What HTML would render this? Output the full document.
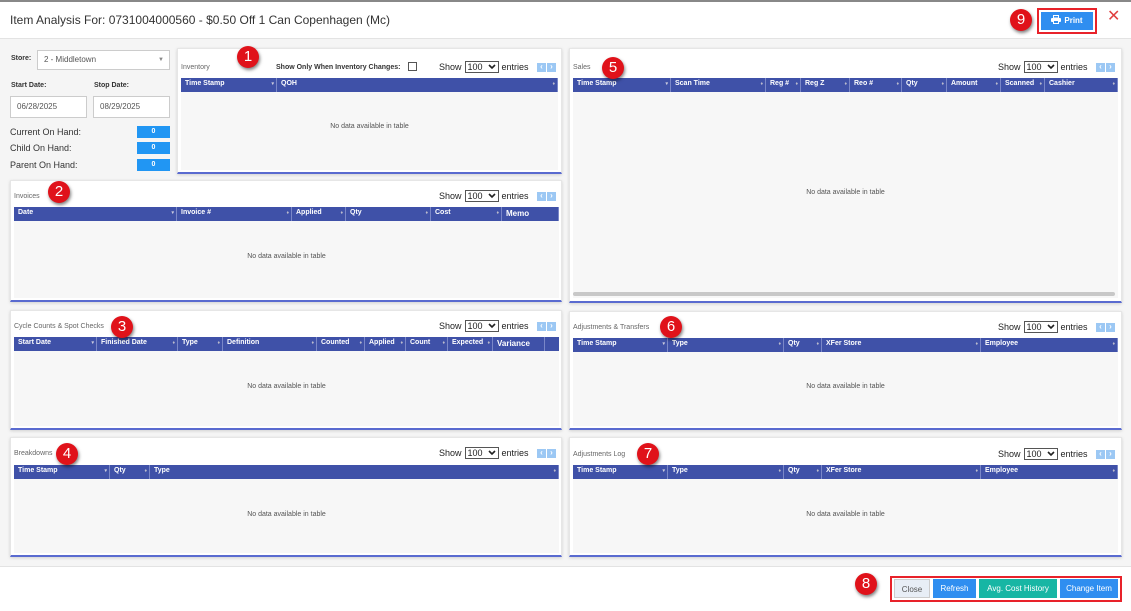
<!DOCTYPE html>
<html><head><meta charset="utf-8"><style>
*{box-sizing:border-box;margin:0;padding:0}
body{width:1131px;height:611px;overflow:hidden;background:#fff;font-family:"Liberation Sans",Arial,sans-serif;position:relative;color:#333}
.a{position:absolute;white-space:nowrap}
.top{left:0;top:0;width:1131px;height:2px;background:#888}
.title{left:10px;top:13px;font-size:12px;color:#333}
.hline{left:0;width:1131px;height:1px;background:#e3e3e3}
.mid{left:0;top:38px;width:1131px;height:528px;background:#f5f5f5}
.panel{background:#fff;border:1px solid #e6e6e6;box-shadow:0 1px 3px rgba(0,0,0,.15);border-bottom:2px solid #5a6bd0}
.ptitle{font-size:7px;color:#666}
.tbody{background:#f7f7f7}
.th{height:14px;background:#3f51a8;display:flex;color:#fff;font-size:7px;font-weight:bold}
.th div{border-right:1px solid #7a87c8;padding:2px 0 0 4px;position:relative;white-space:nowrap;overflow:hidden}
.th div:after{content:"\2666";position:absolute;right:2px;top:3px;font-size:5px;color:#bbc}
.th div.n:after{content:""}
.th div.s:after{content:"\25BE";color:#ccd}
.nd{font-size:7px;color:#555;text-align:center;width:100%}
.show{font-size:9px;color:#222;display:flex;align-items:center}
.sel{display:inline-block;width:34px;height:12px;border:1px solid #555;font-size:9px;padding-left:2px;line-height:10px;margin:0 3px;position:relative;background:#fff}
.sel svg{position:absolute;right:2px;top:2px}
.arrs{display:flex;width:22px}
.arr{display:block;width:9px;height:9px;background:#9cc8f4;margin-right:1px;color:#fff;font-size:8px;text-align:center;line-height:8px;font-weight:bold}
.badge{width:22px;height:22px;border-radius:50%;background:#e0121a;color:#fff;font-size:15px;text-align:center;line-height:22px;box-shadow:1px 2px 3px rgba(0,0,0,.5)}
.lbl{font-size:7px;font-weight:bold;color:#333}
.inp{border:1px solid #ccc;background:#fff;font-size:8px;color:#555;padding-left:6px}
.oh{font-size:9px;color:#333}
.ohv{width:33px;height:12px;background:#2196f3;color:#fff;font-size:7px;text-align:center;line-height:12px;font-weight:bold}
.btn{height:19px;font-size:8px;color:#fff;text-align:center;line-height:19px}
</style></head><body>
<div class="a top"></div>
<div class="a title">Item Analysis For: 0731004000560 - $0.50 Off 1 Can Copenhagen (Mc)</div>
<div class="a mid"></div>
<div class="a hline" style="top:38px"></div>
<div class="a hline" style="top:566px"></div>

<!-- print -->
<div class="a" style="left:1037px;top:8px;width:60px;height:26px;border:2px solid #e8222a"></div>
<div class="a btn" style="left:1041px;top:12px;width:52px;background:#2f8ef0;line-height:18px;height:18px;font-weight:bold"><svg width="10" height="9" viewBox="0 0 10 9" style="vertical-align:-1px;margin-right:3px"><rect x="2.5" y="0.5" width="5" height="2.5" fill="none" stroke="#fff"/><rect x="0" y="3" width="10" height="4" rx="1" fill="#fff"/><rect x="2.5" y="5.5" width="5" height="3" fill="#2f8ef0" stroke="#fff"/></svg>Print</div>
<div class="a" style="left:1107px;top:6px;font-size:16px;color:#e04040">&#x2715;</div>
<div class="a badge" style="left:1010px;top:9px">9</div>

<!-- left controls -->
<div class="a lbl" style="left:11px;top:55px">Store:</div>
<div class="a inp" style="left:37px;top:50px;width:133px;height:20px;line-height:18px">2 - Middletown<span style="position:absolute;right:5px;font-size:6px;color:#888">&#9660;</span></div>
<div class="a lbl" style="left:11px;top:82px">Start Date:</div>
<div class="a lbl" style="left:94px;top:82px">Stop Date:</div>
<div class="a inp" style="left:10px;top:96px;width:77px;height:22px;line-height:20px">06/28/2025</div>
<div class="a inp" style="left:93px;top:96px;width:77px;height:22px;line-height:20px">08/29/2025</div>
<div class="a oh" style="left:10px;top:127px">Current On Hand:</div>
<div class="a ohv" style="left:137px;top:126px">0</div>
<div class="a oh" style="left:10px;top:143px">Child On Hand:</div>
<div class="a ohv" style="left:137px;top:142px">0</div>
<div class="a oh" style="left:10px;top:160px">Parent On Hand:</div>
<div class="a ohv" style="left:137px;top:159px">0</div>

<!-- inventory -->
<div class="a panel" style="left:177px;top:48px;width:385px;height:126px"></div>
<div class="a ptitle" style="left:181px;top:64px">Inventory</div>
<div class="a lbl" style="left:276px;top:64px">Show Only When Inventory Changes:</div>
<div class="a" style="left:408px;top:62px;width:9px;height:9px;border:1px solid #555;background:#fff"></div>
<div class="a show" style="left:439px;top:61px">Show<span class="sel">100<svg width="8" height="6" viewBox="0 0 8 6"><path d="M1 1L4 4L7 1" stroke="#222" stroke-width="1.6" fill="none"/></svg></span>entries</div>
<div class="a arrs" style="left:537px;top:63px"><span class="arr">&lsaquo;</span><span class="arr">&rsaquo;</span></div>
<div class="a th" style="left:181px;top:78px;width:377px"><div class="s" style="width:96px">Time Stamp</div><div style="width:281px">QOH</div></div>
<div class="a tbody" style="left:181px;top:92px;width:377px;height:78px"><div class="nd" style="margin-top:31px">No data available in table</div></div>
<div class="a badge" style="left:237px;top:46px">1</div>

<!-- invoices -->
<div class="a panel" style="left:10px;top:180px;width:552px;height:122px"></div>
<div class="a ptitle" style="left:14px;top:193px">Invoices</div>
<div class="a show" style="left:439px;top:190px">Show<span class="sel">100<svg width="8" height="6" viewBox="0 0 8 6"><path d="M1 1L4 4L7 1" stroke="#222" stroke-width="1.6" fill="none"/></svg></span>entries</div>
<div class="a arrs" style="left:537px;top:192px"><span class="arr">&lsaquo;</span><span class="arr">&rsaquo;</span></div>
<div class="a th" style="left:14px;top:207px;width:545px"><div class="s" style="width:163px">Date</div><div style="width:115px">Invoice #</div><div style="width:54px">Applied</div><div style="width:85px">Qty</div><div style="width:71px">Cost</div><div class="n" style="width:57px;font-size:8px">Memo</div></div>
<div class="a tbody" style="left:14px;top:221px;width:545px;height:77px"><div class="nd" style="margin-top:32px">No data available in table</div></div>
<div class="a badge" style="left:48px;top:181px">2</div>

<!-- cycle -->
<div class="a panel" style="left:10px;top:310px;width:552px;height:120px"></div>
<div class="a ptitle" style="left:14px;top:323px">Cycle Counts &amp; Spot Checks</div>
<div class="a show" style="left:439px;top:320px">Show<span class="sel">100<svg width="8" height="6" viewBox="0 0 8 6"><path d="M1 1L4 4L7 1" stroke="#222" stroke-width="1.6" fill="none"/></svg></span>entries</div>
<div class="a arrs" style="left:537px;top:322px"><span class="arr">&lsaquo;</span><span class="arr">&rsaquo;</span></div>
<div class="a th" style="left:14px;top:337px;width:545px"><div class="s" style="width:83px">Start Date</div><div style="width:81px">Finished Date</div><div style="width:45px">Type</div><div style="width:94px">Definition</div><div style="width:48px">Counted</div><div style="width:41px">Applied</div><div style="width:42px">Count</div><div style="width:45px">Expected</div><div class="n" style="width:52px;font-size:8px">Variance</div><div class="n" style="width:14px;border:none"></div></div>
<div class="a tbody" style="left:14px;top:351px;width:545px;height:75px"><div class="nd" style="margin-top:32px">No data available in table</div></div>
<div class="a badge" style="left:111px;top:316px">3</div>

<!-- breakdowns -->
<div class="a panel" style="left:10px;top:437px;width:552px;height:120px"></div>
<div class="a ptitle" style="left:14px;top:450px">Breakdowns</div>
<div class="a show" style="left:439px;top:447px">Show<span class="sel">100<svg width="8" height="6" viewBox="0 0 8 6"><path d="M1 1L4 4L7 1" stroke="#222" stroke-width="1.6" fill="none"/></svg></span>entries</div>
<div class="a arrs" style="left:537px;top:449px"><span class="arr">&lsaquo;</span><span class="arr">&rsaquo;</span></div>
<div class="a th" style="left:14px;top:465px;width:545px"><div class="s" style="width:96px">Time Stamp</div><div style="width:40px">Qty</div><div style="width:409px">Type</div></div>
<div class="a tbody" style="left:14px;top:479px;width:545px;height:74px"><div class="nd" style="margin-top:32px">No data available in table</div></div>
<div class="a badge" style="left:56px;top:443px">4</div>

<!-- sales -->
<div class="a panel" style="left:569px;top:48px;width:553px;height:255px"></div>
<div class="a ptitle" style="left:573px;top:64px">Sales</div>
<div class="a show" style="left:998px;top:61px">Show<span class="sel">100<svg width="8" height="6" viewBox="0 0 8 6"><path d="M1 1L4 4L7 1" stroke="#222" stroke-width="1.6" fill="none"/></svg></span>entries</div>
<div class="a arrs" style="left:1096px;top:63px"><span class="arr">&lsaquo;</span><span class="arr">&rsaquo;</span></div>
<div class="a th" style="left:573px;top:78px;width:545px"><div class="s" style="width:98px">Time Stamp</div><div style="width:95px">Scan Time</div><div style="width:35px">Reg #</div><div style="width:49px">Reg Z</div><div style="width:52px">Reo #</div><div style="width:45px">Qty</div><div style="width:54px">Amount</div><div style="width:44px">Scanned</div><div style="width:73px">Cashier</div></div>
<div class="a tbody" style="left:573px;top:92px;width:545px;height:206px"><div class="nd" style="margin-top:97px">No data available in table</div></div>
<div class="a" style="left:573px;top:292px;width:542px;height:4px;background:#c8c8c8;border-radius:2px"></div>
<div class="a badge" style="left:602px;top:57px">5</div>

<!-- adj & transfers -->
<div class="a panel" style="left:569px;top:311px;width:553px;height:119px"></div>
<div class="a ptitle" style="left:573px;top:324px">Adjustments &amp; Transfers</div>
<div class="a show" style="left:998px;top:321px">Show<span class="sel">100<svg width="8" height="6" viewBox="0 0 8 6"><path d="M1 1L4 4L7 1" stroke="#222" stroke-width="1.6" fill="none"/></svg></span>entries</div>
<div class="a arrs" style="left:1096px;top:323px"><span class="arr">&lsaquo;</span><span class="arr">&rsaquo;</span></div>
<div class="a th" style="left:573px;top:338px;width:545px"><div class="s" style="width:95px">Time Stamp</div><div style="width:116px">Type</div><div style="width:38px">Qty</div><div style="width:159px">XFer Store</div><div style="width:137px">Employee</div></div>
<div class="a tbody" style="left:573px;top:352px;width:545px;height:74px"><div class="nd" style="margin-top:31px">No data available in table</div></div>
<div class="a badge" style="left:660px;top:316px">6</div>

<!-- adj log -->
<div class="a panel" style="left:569px;top:437px;width:553px;height:120px"></div>
<div class="a ptitle" style="left:573px;top:451px">Adjustments Log</div>
<div class="a show" style="left:998px;top:448px">Show<span class="sel">100<svg width="8" height="6" viewBox="0 0 8 6"><path d="M1 1L4 4L7 1" stroke="#222" stroke-width="1.6" fill="none"/></svg></span>entries</div>
<div class="a arrs" style="left:1096px;top:450px"><span class="arr">&lsaquo;</span><span class="arr">&rsaquo;</span></div>
<div class="a th" style="left:573px;top:465px;width:545px"><div class="s" style="width:95px">Time Stamp</div><div style="width:116px">Type</div><div style="width:38px">Qty</div><div style="width:159px">XFer Store</div><div style="width:137px">Employee</div></div>
<div class="a tbody" style="left:573px;top:479px;width:545px;height:74px"><div class="nd" style="margin-top:32px">No data available in table</div></div>
<div class="a badge" style="left:637px;top:443px">7</div>

<!-- footer buttons -->
<div class="a" style="left:890px;top:576px;width:232px;height:26px;border:2px solid #e8222a"></div>
<div class="a btn" style="left:894px;top:579px;width:36px;background:#e8eef6;color:#555;border:1px solid #ccc">Close</div>
<div class="a btn" style="left:933px;top:579px;width:43px;background:#2f8ef0">Refresh</div>
<div class="a btn" style="left:979px;top:579px;width:78px;background:#17b6a4">Avg. Cost History</div>
<div class="a btn" style="left:1060px;top:579px;width:58px;background:#2f8ef0">Change Item</div>
<div class="a badge" style="left:855px;top:573px">8</div>
</body></html>
